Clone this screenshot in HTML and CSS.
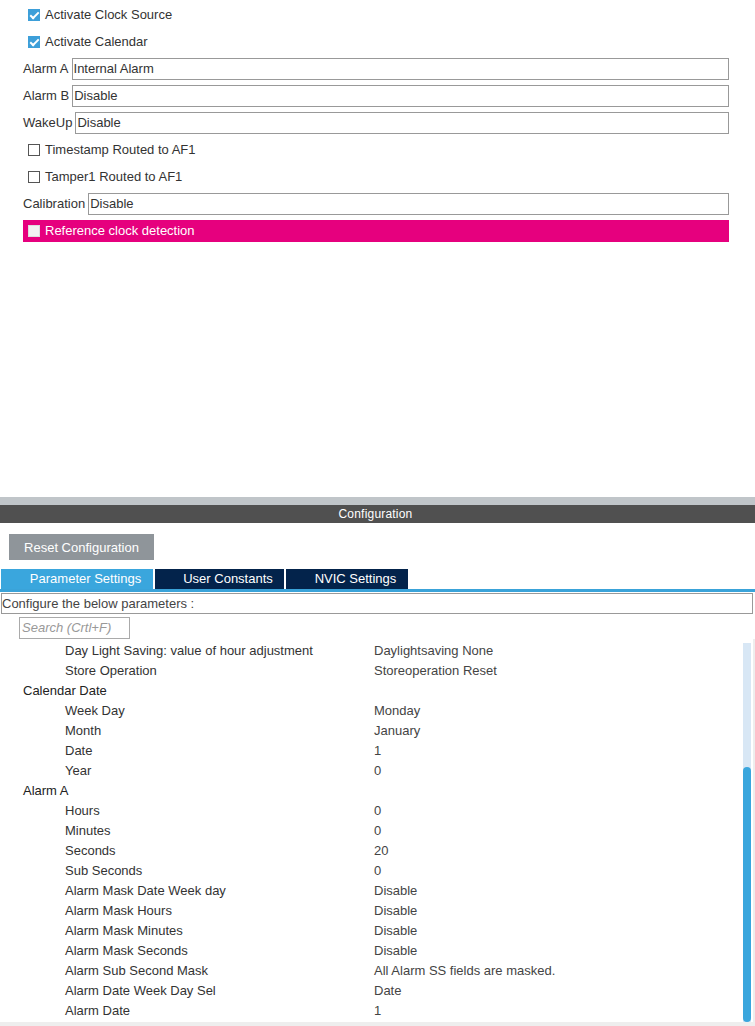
FILE: index.html
```html
<!DOCTYPE html>
<html>
<head>
  <title>RTC Mode and Configuration</title>
  <meta charset="UTF-8"/>
  <link rel="stylesheet" href="styles.css">
</head>
<body>

  <div class="mode">
    <div class="row check-row"><span class="box checked"></span>Activate Clock Source</div>
    <div class="row check-row"><span class="box checked"></span>Activate Calendar</div>
    <div class="row"><span class="label">Alarm A</span><div class="field">Internal Alarm</div></div>
    <div class="row"><span class="label">Alarm B</span><div class="field">Disable</div></div>
    <div class="row"><span class="label">WakeUp</span><div class="field">Disable</div></div>
    <div class="row check-row"><span class="box"></span>Timestamp Routed to AF1</div>
    <div class="row check-row"><span class="box"></span>Tamper1 Routed to AF1</div>
    <div class="row"><span class="label">Calibration</span><div class="field">Disable</div></div>
    <div class="row"><div class="warn"><span class="box light"></span>Reference clock detection</div></div>
  </div>

  <div class="config">
    <div class="config-title">Configuration</div>
    <button class="reset-button">Reset Configuration</button>
    <div class="tabs">
      <div class="tab active">Parameter Settings</div>
      <div class="tab">User Constants</div>
      <div class="tab">NVIC Settings</div>
    </div>
    <div class="hint">Configure the below parameters :</div>
    <div class="search">Search (Crtl+F)</div>

    <div class="tree">
      <div class="params">
        <div class="param"><span class="name">Day Light Saving: value of hour adjustment</span><span class="value">Daylightsaving None</span></div>
        <div class="param"><span class="name">Store Operation</span><span class="value">Storeoperation Reset</span></div>
        <div class="group">Calendar Date</div>
        <div class="param"><span class="name">Week Day</span><span class="value">Monday</span></div>
        <div class="param"><span class="name">Month</span><span class="value">January</span></div>
        <div class="param"><span class="name">Date</span><span class="value">1</span></div>
        <div class="param"><span class="name">Year</span><span class="value">0</span></div>
        <div class="group">Alarm A</div>
        <div class="param"><span class="name">Hours</span><span class="value">0</span></div>
        <div class="param"><span class="name">Minutes</span><span class="value">0</span></div>
        <div class="param"><span class="name">Seconds</span><span class="value">20</span></div>
        <div class="param"><span class="name">Sub Seconds</span><span class="value">0</span></div>
        <div class="param"><span class="name">Alarm Mask Date Week day</span><span class="value">Disable</span></div>
        <div class="param"><span class="name">Alarm Mask Hours</span><span class="value">Disable</span></div>
        <div class="param"><span class="name">Alarm Mask Minutes</span><span class="value">Disable</span></div>
        <div class="param"><span class="name">Alarm Mask Seconds</span><span class="value">Disable</span></div>
        <div class="param"><span class="name">Alarm Sub Second Mask</span><span class="value">All Alarm SS fields are masked.</span></div>
        <div class="param"><span class="name">Alarm Date Week Day Sel</span><span class="value">Date</span></div>
        <div class="param"><span class="name">Alarm Date</span><span class="value">1</span></div>
      </div>
      <div class="scrollbar"><div class="thumb"></div></div>
    </div>
  </div>

</body>
</html>
```

FILE: styles.css
```css
body {
  margin: 0;
  width: 755px;
  height: 1026px;
  overflow: hidden;
  background-color: white;
  font-family: "Liberation Sans", Arial, sans-serif;
  font-size: 13px;
  color: #333;
}

.mode {
  box-sizing: border-box;
  padding: 1px 0 0 23px;
  width: 729px;
  height: 497px;
}

.row {
  display: flex;
  align-items: center;
  height: 27px;
}

.check-row {
  padding-left: 5px;
}

.box {
  display: inline-block;
  box-sizing: border-box;
  width: 12px;
  height: 12px;
  margin-right: 5px;
  border: 1px solid #555;
  background-color: white;
  position: relative;
}

.box.checked {
  border: none;
  background-color: #3d9fd9;
}

.box.checked::after {
  content: "";
  position: absolute;
  left: 4px;
  top: 1px;
  width: 3px;
  height: 7px;
  border: solid white;
  border-width: 0 2px 2px 0;
  transform: rotate(45deg);
}

.box.light {
  border: 1px solid #ddd;
  background-color: #f2f2f2;
}

.label {
  margin-right: 3px;
}

.field {
  flex: 1;
  box-sizing: border-box;
  height: 22px;
  line-height: 20px;
  padding-left: 1px;
  border: 1px solid #999;
}

.warn {
  flex: 1;
  display: flex;
  align-items: center;
  height: 22px;
  padding-left: 5px;
  background-color: #e6007e;
  color: white;
}

.config {
  border-top: 8px solid #c0c5c9;
}

.config-title {
  background-color: #505050;
  color: white;
  text-align: center;
  height: 18px;
  line-height: 18px;
  font-size: 12px;
  letter-spacing: 0.2px;
  padding-right: 4px;
}

.reset-button {
  display: block;
  margin: 11px 0 0 9px;
  width: 145px;
  height: 26px;
  border: none;
  background-color: #8f959a;
  color: white;
  font-family: "Liberation Sans", Arial, sans-serif;
  font-size: 13px;
}

.tabs {
  display: flex;
  gap: 2px;
  margin-top: 9px;
  padding-left: 1px;
  border-bottom: 3px solid #3aa3d9;
}

.tab {
  box-sizing: border-box;
  height: 20px;
  line-height: 20px;
  padding-left: 17px;
  background-color: #03234b;
  color: white;
  font-size: 13px;
  width: 129px;
  text-align: center;
}

.tab.active {
  background-color: #3aa6dd;
  width: 152px;
}

.tab:last-child {
  width: 122px;
}

.hint {
  box-sizing: border-box;
  margin: 1px 2px 0 1px;
  height: 21px;
  line-height: 19px;
  border: 1px solid #999;
  color: #444;
}

.search {
  box-sizing: border-box;
  margin: 3px 0 0 19px;
  width: 111px;
  height: 22px;
  line-height: 20px;
  padding-left: 2px;
  border: 1px solid #aaa;
  color: #999;
  font-style: italic;
}

.tree {
  display: flex;
  height: 383px;
  border-right: 2px solid #eee;
  border-bottom: 4px solid #eee;
}

.params {
  flex: 1;
  padding-top: 2px;
}

.param, .group {
  display: flex;
  height: 20px;
  line-height: 20px;
}

.group {
  padding-left: 23px;
  color: #222;
}

.param .name {
  width: 309px;
  padding-left: 65px;
}

.param .value {
  color: #444;
}

.scrollbar {
  width: 8px;
  margin: 4px 2px 0 0;
  background-color: #d8e7f5;
  display: flex;
  flex-direction: column;
  justify-content: flex-end;
}

.thumb {
  height: 255px;
  background-color: #3aa6dd;
  border-radius: 4px;
}
```
